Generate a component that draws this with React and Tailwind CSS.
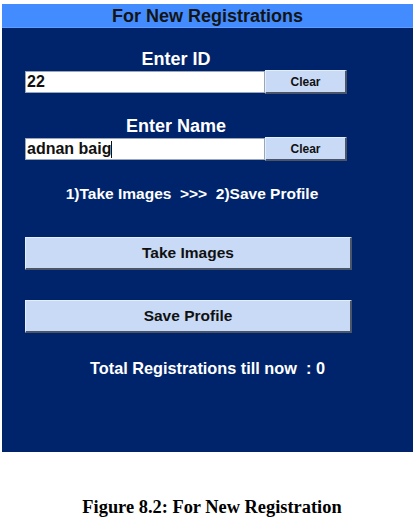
export default function App() {
  const sans = { fontFamily: '"Liberation Sans", Arial, sans-serif' };
  const btn =
    "bg-[#c8daf6] border-t border-l border-t-[#e4edfc] border-l-[#e4edfc] border-b-2 border-r-2 border-b-[#4a5568] border-r-[#4a5568] flex items-center justify-center font-bold text-[#111]";
  return (
    <div className="w-[415px] h-[531px] bg-white" style={sans}>
      <div className="pt-[4px] pl-[2px]">
        <div className="w-[411px] h-[448px] bg-[#00246b] flex flex-col">
          <div className="h-[24px] bg-[#428cff] border-b border-b-[#5f9cff] flex items-center justify-center text-[18px] font-bold text-[#141414] leading-none">
            For New Registrations
          </div>
          <div className="pl-[23px] flex flex-col">
            <div className="mt-[21px] w-[302px] h-[20px] text-center text-white font-bold text-[18px] leading-[20px]">
              Enter ID
            </div>
            <div className="mt-[1px] h-[24px] flex items-center">
              <div className="w-[240px] h-[22px] bg-white border border-[#9aa5b8] flex items-center pl-[1px] text-[16px] font-bold text-[#111] leading-none">
                22
              </div>
              <div className={btn + " w-[82px] h-[24px] text-[12px]"}>Clear</div>
            </div>
            <div className="mt-[22px] w-[302px] h-[20px] text-center text-white font-bold text-[18px] leading-[20px]">
              Enter Name
            </div>
            <div className="mt-[1px] h-[24px] flex items-center">
              <div className="w-[240px] h-[22px] bg-white border border-[#9aa5b8] flex items-center pl-[1px] text-[16px] font-bold text-[#111] leading-none">
                adnan baig
                <span className="inline-block w-[1px] h-[17px] bg-[#111]" />
              </div>
              <div className={btn + " w-[82px] h-[24px] text-[12px]"}>Clear</div>
            </div>
            <div className="mt-[24px] w-[334px] h-[18px] text-center text-white font-bold text-[15.5px] leading-[18px] whitespace-pre">
              {"1)Take Images  >>>  2)Save Profile"}
            </div>
            <div className={btn + " mt-[34px] w-[327px] h-[33px] text-[15.5px]"}>Take Images</div>
            <div className={btn + " mt-[30px] w-[327px] h-[33px] text-[15.5px]"}>Save Profile</div>
          </div>
          <div className="mt-[25px] h-[20px] text-center text-white font-bold text-[16.3px] leading-[20px] whitespace-pre">
            {"Total Registrations till now  : 0"}
          </div>
        </div>
      </div>
      <div
        className="mt-[45px] pl-[9px] h-[20px] text-center font-bold text-[18.4px] leading-[20px] text-black"
        style={{ fontFamily: '"Liberation Serif", "Times New Roman", serif' }}
      >
        Figure 8.2: For New Registration
      </div>
    </div>
  );
}
